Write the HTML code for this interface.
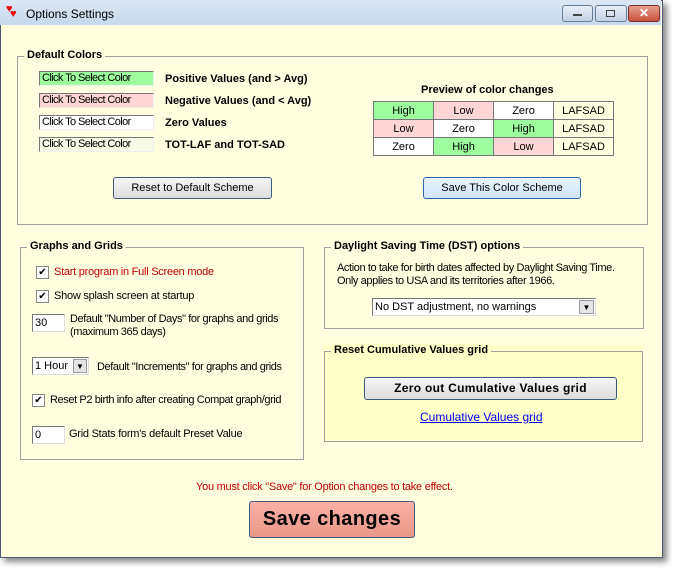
<!DOCTYPE html>
<html><head><style>
body{margin:0;width:674px;height:575px;background:#fff;position:relative;overflow:hidden;font-family:"Liberation Sans",sans-serif;font-size:11px;color:#000}
.a{position:absolute}
.t{letter-spacing:-0.25px}
.win{left:0;top:0;width:661px;height:556px;border:1px solid #4a5a70;background:#ffffe0;box-shadow:4px 4px 6px #888}
.title{left:0;top:0;width:661px;height:25px;background:linear-gradient(#dbe7f3,#c6d8ec)}
.fs{position:absolute;border:1px solid #a0a0a0}
.lg{position:absolute;background:#ffffe0;font-weight:bold;font-size:11px;padding:0 3px;top:-8px;left:6px}
.cb{position:absolute;width:111px;height:13px;border:1px solid;border-color:#777 #eee #eee #777;font-size:11px;line-height:13px;padding-left:2px;box-sizing:content-box;letter-spacing:-0.6px}
.lab{position:absolute;font-weight:bold;font-size:11px}
table{border-collapse:collapse;position:absolute;left:373px;top:101px}
td{border:1px solid #777;width:59px;height:17px;padding:0;text-align:center;font-size:11px}
.g{background:#9dfc9d}.p{background:#ffd6d6}.w{background:#fff}
.btn{position:absolute;border:1px solid #3c5a7c;border-radius:3px;background:linear-gradient(#f6f6f6,#dcdcdc);text-align:center;font-size:11px}
.ck{position:absolute;width:11px;height:11px;border:1px solid #888;background:#fff;font-size:10px;line-height:11px;text-align:center}
.tb{position:absolute;height:16px;border:1px solid;border-color:#777 #ddd #ddd #777;background:#fff;font-size:11px;line-height:16px;padding-left:2px}
</style></head><body>
<div class="a win"></div>
<div class="a title"></div>
<div class="a" style="left:6px;top:3px;color:#e00;font-size:11px">♥</div>
<div class="a" style="left:10px;top:8px;color:#e00;font-size:11px">♥</div>
<div class="a" style="left:26px;top:7px;font-size:12px">Options Settings</div>
<div class="a" style="left:562px;top:5px;width:29px;height:15px;border:1px solid #6a7d97;border-radius:3px;background:linear-gradient(#e8eef6,#c4d2e4)"><div class="a" style="left:10px;top:8px;width:9px;height:2px;background:#444"></div></div>
<div class="a" style="left:595px;top:5px;width:30px;height:15px;border:1px solid #6a7d97;border-radius:3px;background:linear-gradient(#e8eef6,#c4d2e4)"><div class="a" style="left:10px;top:4px;width:7px;height:5px;border:1px solid #444"></div></div>
<div class="a" style="left:628px;top:5px;width:30px;height:15px;border:1px solid #7a3030;border-radius:3px;background:linear-gradient(#e9a08e,#c8503c);color:#fff;font-weight:bold;text-align:center;font-size:12px;line-height:15px">✕</div>

<div class="fs" style="left:17px;top:56px;width:629px;height:167px"><div class="lg">Default Colors</div></div>
<div class="cb" style="left:39px;top:71px;background:#9dfc9d">Click To Select Color</div>
<div class="cb" style="left:39px;top:93px;background:#ffd6d6">Click To Select Color</div>
<div class="cb" style="left:39px;top:115px;background:#fff">Click To Select Color</div>
<div class="cb" style="left:39px;top:137px;background:#f5fbe6">Click To Select Color</div>
<div class="lab" style="left:165px;top:73px">Positive Values (and &gt; Avg)</div>
<div class="lab" style="left:165px;top:95px">Negative Values (and &lt; Avg)</div>
<div class="lab" style="left:165px;top:117px">Zero Values</div>
<div class="lab" style="left:165px;top:139px">TOT-LAF and TOT-SAD</div>
<div class="lab" style="left:421px;top:84px">Preview of color changes</div>
<table>
<tr><td class="g">High</td><td class="p">Low</td><td class="w">Zero</td><td>LAFSAD</td></tr>
<tr><td class="p">Low</td><td class="w">Zero</td><td class="g">High</td><td>LAFSAD</td></tr>
<tr><td class="w">Zero</td><td class="g">High</td><td class="p">Low</td><td>LAFSAD</td></tr>
</table>
<div class="btn" style="left:113px;top:177px;width:157px;height:20px;line-height:20px">Reset to Default Scheme</div>
<div class="btn" style="left:423px;top:177px;width:156px;height:20px;line-height:20px;border-color:#2a6ab0;background:linear-gradient(#eaf4fc,#cfe6f8)">Save This Color Scheme</div>

<div class="fs" style="left:20px;top:247px;width:282px;height:211px"><div class="lg">Graphs and Grids</div></div>
<div class="ck" style="left:36px;top:266px">✔</div>
<div class="a t" style="left:54px;top:266px;color:#c00000">Start program in Full Screen mode</div>
<div class="ck" style="left:36px;top:290px">✔</div>
<div class="a t" style="left:54px;top:290px">Show splash screen at startup</div>
<div class="tb" style="left:32px;top:314px;width:29px">30</div>
<div class="a t" style="left:70px;top:313px;line-height:13px;letter-spacing:-0.4px">Default "Number of Days" for graphs and grids<br>(maximum 365 days)</div>
<div class="tb" style="left:32px;top:357px;width:53px">1 Hour<span class="a" style="right:1px;top:1px;width:14px;height:14px;background:#e4e4e4;border:1px solid #999;box-sizing:border-box;font-size:8px;line-height:13px;text-align:center">▼</span></div>
<div class="a t" style="left:97px;top:361px;letter-spacing:-0.4px">Default "Increments" for graphs and grids</div>
<div class="ck" style="left:32px;top:394px">✔</div>
<div class="a t" style="left:50px;top:394px;letter-spacing:-0.4px">Reset P2 birth info after creating Compat graph/grid</div>
<div class="tb" style="left:32px;top:426px;width:29px">0</div>
<div class="a t" style="left:69px;top:428px">Grid Stats form's default Preset Value</div>

<div class="fs" style="left:324px;top:247px;width:318px;height:80px"><div class="lg">Daylight Saving Time (DST) options</div></div>
<div class="a" style="left:337px;top:262px;line-height:13px;letter-spacing:-0.4px">Action to take for birth dates affected by Daylight Saving Time.<br>Only applies to USA and its territories after 1966.</div>
<div class="tb" style="left:372px;top:298px;width:220px">No DST adjustment, no warnings<span class="a" style="right:1px;top:1px;width:15px;height:14px;background:#e4e4e4;border:1px solid #999;box-sizing:border-box;font-size:8px;line-height:13px;text-align:center">▼</span></div>

<div class="a" style="left:323px;top:345px;width:320px;height:96px;background:#ffffc8"></div>
<div class="fs" style="left:324px;top:351px;width:317px;height:89px"><div class="lg" style="background:#ffffc8">Reset Cumulative Values grid</div></div>
<div class="btn" style="left:364px;top:377px;width:251px;height:21px;line-height:21px;font-weight:bold;font-size:12px;letter-spacing:0.3px">Zero out Cumulative Values grid</div>
<div class="a" style="left:420px;top:410px;color:#0000ee;text-decoration:underline;font-size:12px">Cumulative Values grid</div>

<div class="a t" style="left:196px;top:481px;color:#c00000">You must click "Save" for Option changes to take effect.</div>
<div class="btn" style="left:249px;top:501px;width:164px;height:35px;line-height:35px;background:linear-gradient(#fbb0a4,#e89888);border-color:#3c5a7c;font-weight:bold;font-size:20px;letter-spacing:0.4px">Save changes</div>
</body></html>
